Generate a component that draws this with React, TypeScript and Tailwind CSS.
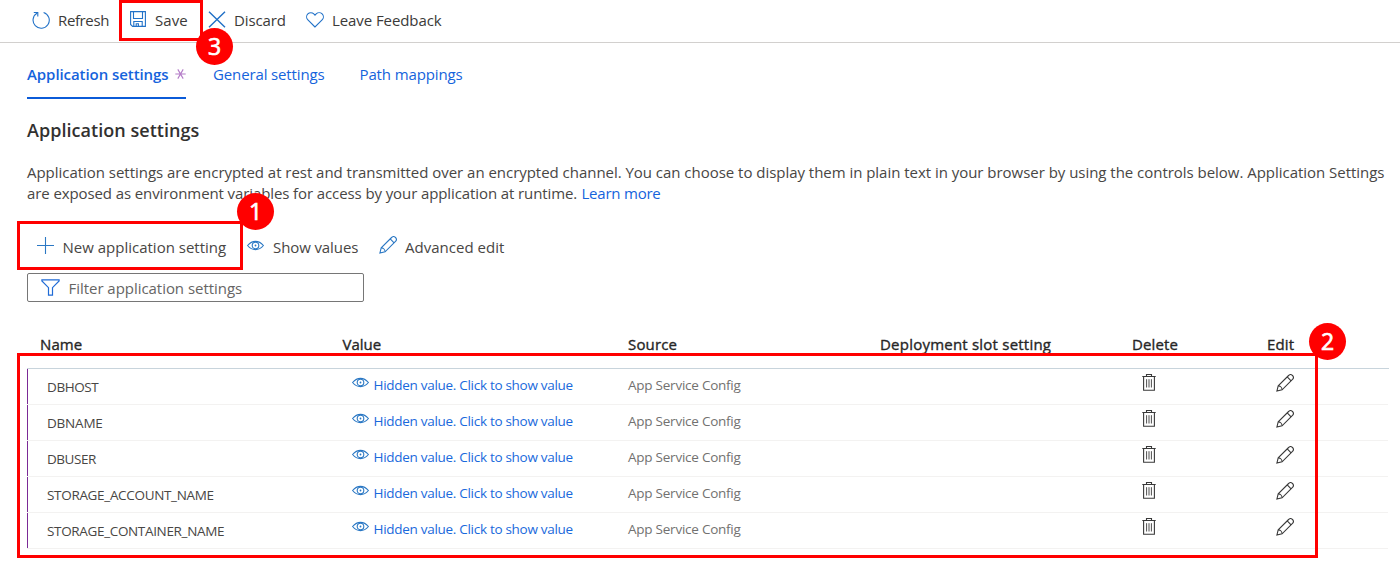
import type { ReactNode } from "react";

const SETTINGS = [
  { name: "DBHOST", tracking: "tracking-[-0.4px]" },
  { name: "DBNAME", tracking: "tracking-[-0.2px]" },
  { name: "DBUSER", tracking: "tracking-[-0.45px]" },
  { name: "STORAGE_ACCOUNT_NAME", tracking: "tracking-[-0.32px]" },
  { name: "STORAGE_CONTAINER_NAME", tracking: "tracking-[-0.34px]" },
];

type IconProps = { className?: string };

function RefreshIcon() {
  return (
    <svg className="h-[18px] w-[18px] shrink-0" viewBox="0 0 18 18" fill="none" stroke="#2272c8" strokeWidth="1.1">
      <path d="M11.6 1.4A8.1 8.1 0 1 1 5.3 2" />
      <path d="M1.8 1.5H5.8V5.5" />
    </svg>
  );
}

function SaveIcon() {
  return (
    <svg className="-mt-0.5 h-4 w-4 shrink-0" viewBox="0 0 16 16" fill="none" stroke="#2272c8" strokeWidth="1.1">
      <path d="M.6.6H15.4V15.4H2.6L.6 13.4Z" />
      <path d="M3.5.6V7.5H12.5V.6" />
      <path d="M3.8 15.4V10.5H12.2V15.4M6.2 15.4V12.8H8.4V15.4" />
    </svg>
  );
}

function DiscardIcon() {
  return (
    <svg className="-mt-px h-[17px] w-[18px] shrink-0" viewBox="0 0 18 17" fill="none" stroke="#1f6fc6" strokeWidth="1.4">
      <path d="M1 .8L17 16.2M17 .8L1 16.2" />
    </svg>
  );
}

function HeartIcon() {
  return (
    <svg className="-mt-px h-4 w-[18px] shrink-0" viewBox="0 0 18 16" fill="none" stroke="#2272c8" strokeWidth="1.1">
      <path d="M9 15L1.9 7.9A4.2 4.2 0 0 1 7.8 1.9L9 3.1L10.2 1.9A4.2 4.2 0 0 1 16.1 7.9Z" />
    </svg>
  );
}

function AsteriskIcon() {
  return (
    <svg className="h-3 w-[11px] shrink-0" viewBox="0 0 11 12" fill="none" stroke="#b47cc8" strokeWidth="1.1">
      <path d="M.3 6H10.7M2.8 1.4L8.2 10.6M8.2 1.4L2.8 10.6" />
    </svg>
  );
}

function PlusIcon() {
  return (
    <svg className="-mt-[3px] h-[17px] w-[17px] shrink-0" viewBox="0 0 17 17" fill="none" stroke="#2b78c4" strokeWidth="1.1">
      <path d="M8.5 0V17M0 8.5H17" />
    </svg>
  );
}

function EyeIcon({ className = "" }: IconProps) {
  return (
    <svg className={`h-[11px] w-[17px] shrink-0 ${className}`} viewBox="0 0 17 11" fill="none" stroke="#2b78c4" strokeWidth="1.1">
      <path d="M.6 5.5C3.2 2.4 5.7 1.4 8.5 1.4S13.8 2.4 16.4 5.5C13.8 8.6 11.3 9.6 8.5 9.6S3.2 8.600.6 5.5Z" />
      <circle cx="8.5" cy="5.5" r="3.3" />
      <circle cx="8.5" cy="5.5" r="0.9" fill="#2b78c4" stroke="none" />
    </svg>
  );
}

function PencilIcon({ className = "" }: IconProps) {
  return (
    <svg className={`h-[18px] w-[18px] shrink-0 ${className}`} viewBox="0 0 18 18" fill="none" stroke="currentColor" strokeWidth="1.1">
      <path d="M.9 17.1L2.2 11.9L12.6 1.5A2.6 2.6 0 0 1 16.5 5.4L6.1 15.8Z" />
      <path d="M11.2 2.9L15.1 6.8M2.2 11.9C4.3 11.9 6.1 13.6 6.1 15.8" />
    </svg>
  );
}

function TrashIcon() {
  return (
    <svg className="h-[18px] w-[14px] shrink-0" viewBox="0 0 14 18" fill="none" stroke="#3a3a3a" strokeWidth="1.1">
      <path d="M.3 3.5H13.7M4.5 3.5V1.5H9.5V3.5" />
      <path d="M1.6 3.5V17.3H12.4V3.5" />
      <path d="M4.6 6.2V14.5M7 6.2V14.5M9.4 6.2V14.5" strokeWidth="0.9" />
    </svg>
  );
}

function FilterIcon() {
  return (
    <svg className="h-[17px] w-[19px] shrink-0" viewBox="0 0 19 17" fill="none" stroke="#1f6bd6" strokeWidth="1.2">
      <path d="M.9.8H18.1V1.9L11.5 8.7V16.2H7.5V8.7L.9 1.9Z" />
    </svg>
  );
}

function Callout({ box, badge, children }: { box: string; badge: string; children: ReactNode }) {
  return (
    <>
      <div className={`pointer-events-none absolute border-3 border-[#ff0000] ${box}`} />
      <div className={`absolute flex h-[37px] w-[37px] items-center justify-center rounded-full bg-[#ff0000] font-['Open_Sans',sans-serif] text-[23px] leading-none text-white [-webkit-text-stroke:0.7px_white] ${badge}`}>
        {children}
      </div>
    </>
  );
}

export default function App() {
  return (
    <div className="relative h-[562px] w-[1400px] overflow-hidden bg-white font-['Open_Sans','Noto_Sans',sans-serif] text-[15px] whitespace-nowrap text-[#484644]">
      <header className="flex h-[43px] items-start border-b border-[#d2d0ce] text-[#3b3a39]">
        <div className="flex h-[40px] items-center pl-8">
          <RefreshIcon />
          <span className="ml-2 w-[72px] tracking-[-0.38px]">Refresh</span>
          <SaveIcon />
          <span className="ml-[9px] w-[53px] tracking-[0.1px]">Save</span>
          <DiscardIcon />
          <span className="ml-2 w-[72px] tracking-[-0.14px]">Discard</span>
          <HeartIcon />
          <span className="ml-2 tracking-[-0.08px]">Leave Feedback</span>
        </div>
      </header>

      <nav className="flex h-[56px] pl-[27px] text-[#1563dc]">
        <div className="mr-[27px] flex w-[159px] items-center border-b-2 border-[#0b5bd8] pt-[8px]">
          <span className="w-[148px] font-semibold tracking-[-0.07px]">Application settings</span>
          <AsteriskIcon />
        </div>
        <div className="w-[146.5px] pt-[20px] leading-[22px] tracking-[-0.13px]">General settings</div>
        <div className="pt-[20px] leading-[22px] tracking-[-0.12px]">Path mappings</div>
      </nav>

      <main className="pl-[27px]">
        <h1 className="pt-[19px] text-[18px] leading-[24px] font-semibold tracking-[0.04px] text-[#323130]">Application settings</h1>
        <div className="mt-[20px] leading-[21px]">
          <p className="tracking-[-0.03px]">
            Application settings are encrypted at rest and transmitted over an encrypted channel. You can choose to display them in plain text in your browser by using the controls below. Application Settings
          </p>
          <p className="flex">
            <span className="w-[554.5px] tracking-[-0.1px]">are exposed as environment variables for access by your application at runtime.</span>
            <a className="tracking-[-0.22px] text-[#1563dc]">Learn more</a>
          </p>
        </div>

        <div className="mt-[31px] flex h-[24px] items-center pl-[10px]">
          <PlusIcon />
          <span className="ml-[8.5px] w-[184.5px]">New application setting</span>
          <EyeIcon className="-mt-[3px]" />
          <span className="ml-[9px] w-[106px] tracking-[-0.1px]">Show values</span>
          <PencilIcon className="-mt-1 text-[#2b78c4]" />
          <span className="ml-2 tracking-[0.02px]">Advanced edit</span>
        </div>

        <div className="mt-[14px] flex h-[29px] w-[337px] items-center rounded-[2px] border border-[#767676] pl-[13px] text-[#666564]">
          <FilterIcon />
          <span className="ml-[8.5px] pt-[2px] tracking-[-0.04px]">Filter application settings</span>
        </div>

        <section className="mt-[32px] w-[1362px]">
          <div className="grid h-[35px] grid-cols-[302.5px_285.5px_252px_252px_135px_1fr] border-b border-[#c8d4dc] pl-[13px] leading-[20px] text-[#262626] [-webkit-text-stroke:0.35px_#262626]">
            <span className="tracking-[0.1px]">Name</span>
            <span>Value</span>
            <span className="tracking-[0.15px]">Source</span>
            <span className="tracking-[0.22px]">Deployment slot setting</span>
            <span className="tracking-[0.15px]">Delete</span>
            <span className="tracking-[0.15px]">Edit</span>
          </div>
          {SETTINGS.map((s) => (
            <div key={s.name} className="mr-px h-9 border-b border-[#f3f2f1]">
              <div className="grid h-[35px] grid-cols-[305px_276px_514px_134px_1fr] border-l border-[#7b2a96] pl-[19px] text-[13.5px] leading-[20px]">
                <span className={`pt-2 ${s.tracking}`}>{s.name}</span>
                <span className="flex text-[#1a69dc]">
                  <EyeIcon className="mt-2" />
                  <span className="ml-[4.5px] pt-[6px] tracking-[-0.29px]">Hidden value. Click to show value</span>
                </span>
                <span className="pt-[6px] tracking-[-0.24px] text-[#727170]">App Service Config</span>
                <span className="pt-[4px]">
                  <TrashIcon />
                </span>
                <span className="pt-[5px]">
                  <PencilIcon className="text-[#3a3a3a]" />
                </span>
              </div>
            </div>
          ))}
        </section>
      </main>

      <Callout box="left-[119px] top-0 h-[41px] w-[84px]" badge="left-[196px] top-[28px]">3</Callout>
      <Callout box="left-[17px] top-[221px] h-[49px] w-[226px]" badge="left-[237px] top-[193px]">1</Callout>
      <Callout box="left-[17px] top-[353px] h-[205px] w-[1301px]" badge="left-[1309px] top-[323px]">2</Callout>
    </div>
  );
}
